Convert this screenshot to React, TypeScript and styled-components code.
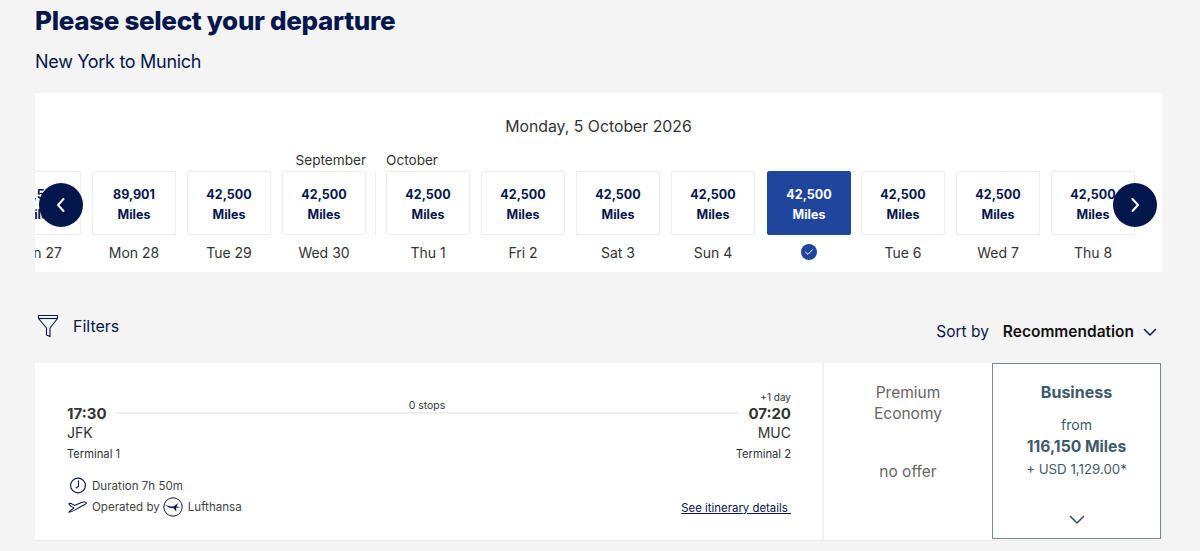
import React from 'react';
import styled, { createGlobalStyle } from 'styled-components';

const FONT = `Inter, "Liberation Sans", sans-serif`;
const NAVY = '#05164d';

const days = [
  { id: 'sun27', miles: '42,500', label: 'Sun 27' },
  { id: 'mon28', miles: '89,901', label: 'Mon 28' },
  { id: 'tue29', miles: '42,500', label: 'Tue 29' },
  { id: 'wed30', miles: '42,500', label: 'Wed 30', month: 'September', monthEnd: true },
  { id: 'thu1', miles: '42,500', label: 'Thu 1', month: 'October', monthStart: true },
  { id: 'fri2', miles: '42,500', label: 'Fri 2' },
  { id: 'sat3', miles: '42,500', label: 'Sat 3' },
  { id: 'sun4', miles: '42,500', label: 'Sun 4' },
  { id: 'mon5', miles: '42,500', label: '', selected: true },
  { id: 'tue6', miles: '42,500', label: 'Tue 6' },
  { id: 'wed7', miles: '42,500', label: 'Wed 7' },
  { id: 'thu8', miles: '42,500', label: 'Thu 8' },
];

const App: React.FC = () => {
  return (
    <Page>
      <GlobalStyle />
      <Title>Please select your departure</Title>
      <Subtitle>New York to Munich</Subtitle>

      <Calendar>
        <CalendarDate>Monday, 5 October 2026</CalendarDate>
        <StripWrap>
          <Strip>
            {days.map(day => (
              <Day key={day.id} $monthStart={day.monthStart} $selected={day.selected}>
                <Month $end={day.monthEnd}>{day.month}</Month>
                <DayCard $selected={day.selected}>
                  <span>{day.miles}</span>
                  <span>Miles</span>
                </DayCard>
                <DayLabel>
                  {day.selected ? <CheckIcon /> : day.label}
                </DayLabel>
              </Day>
            ))}
          </Strip>
          <ArrowButton $side="left">
            <svg width="12" height="16" viewBox="0 0 12 16" fill="none" stroke="#fff" strokeWidth="2" strokeLinecap="round" strokeLinejoin="round">
              <path d="M8.5 2 L3 8 L8.5 14" />
            </svg>
          </ArrowButton>
          <ArrowButton $side="right">
            <svg width="12" height="16" viewBox="0 0 12 16" fill="none" stroke="#fff" strokeWidth="2" strokeLinecap="round" strokeLinejoin="round">
              <path d="M3.5 2 L9 8 L3.5 14" />
            </svg>
          </ArrowButton>
        </StripWrap>
      </Calendar>

      <Toolbar>
        <FilterButton>
          <svg width="24" height="24" viewBox="0 0 24 24" fill="none" stroke={NAVY} strokeWidth="1.1" strokeLinejoin="round">
            <path d="M2.5 1.5 H21.5 V4.5 L14 14 V22.5 L10.5 21 V14 L2.5 4.5 Z" />
            <path d="M2.5 4.5 H21.5" />
          </svg>
          Filters
        </FilterButton>
        <SortBox>
          <SortLabel>Sort by</SortLabel>
          <SortValue>Recommendation</SortValue>
          <svg width="14" height="9" viewBox="0 0 14 9" fill="none" stroke={NAVY} strokeWidth="1.5" strokeLinecap="round" strokeLinejoin="round">
            <path d="M1.5 1.5 L7 7 L12.5 1.5" />
          </svg>
        </SortBox>
      </Toolbar>

      <Result>
        <FlightInfo>
          <Route>
            <Endpoint $width={49}>
              <DayShift>&nbsp;</DayShift>
              <Time>17:30</Time>
              <Airport>JFK</Airport>
              <Terminal>Terminal 1</Terminal>
            </Endpoint>
            <RouteLine>
              <Stops>0 stops</Stops>
            </RouteLine>
            <Endpoint $width={53} $right>
              <DayShift>+1 day</DayShift>
              <Time>07:20</Time>
              <Airport>MUC</Airport>
              <Terminal>Terminal 2</Terminal>
            </Endpoint>
          </Route>
          <Meta>
            <MetaList>
              <MetaRow>
                <svg width="18" height="17" viewBox="0 0 18 17" fill="none" stroke={NAVY} strokeWidth="1.1" strokeLinecap="round">
                  <circle cx="9.5" cy="8.5" r="7.4" />
                  <path d="M10 3.8 V9 L7.6 11" />
                </svg>
                Duration 7h 50m
              </MetaRow>
              <MetaRow>
                <svg width="19" height="12" viewBox="0 0 19 12" fill="none" stroke={NAVY} strokeWidth="1.05" strokeLinejoin="round">
                  <path d="M.8 2.8 L2.6 2.2 L6.4 4.4 L13.6 1.4 C15.6 .7 18.4 1 18.4 2 C18.4 3 16 4 14.2 4.8 L7.6 8.6 C5.4 9.9 2.8 11.2 .8 11.2 C1.4 10.2 4.2 8.4 6 6.9 L3 5.4 Z" />
                </svg>
                Operated by
                <LogoMark>
                  <svg width="20" height="20" viewBox="0 0 20 20" fill="none">
                    <circle cx="10" cy="10" r="9.2" stroke={NAVY} strokeWidth="1" />
                    <path d="M1.6 7.4 C5 9 8 9.6 10.4 9.4 L15.4 6 L13.4 9.6 L18 10.2 L13.2 10.8 L13.2 14.4 L10.4 11 C7 11.2 4.4 10 1.6 7.4 Z" fill={NAVY} />
                  </svg>
                </LogoMark>
                Lufthansa
              </MetaRow>
            </MetaList>
            <DetailsLink>See itinerary details&nbsp;</DetailsLink>
          </Meta>
        </FlightInfo>

        <PremiumCell>
          <CabinName>Premium<br />Economy</CabinName>
          <NoOffer>no offer</NoOffer>
        </PremiumCell>

        <BusinessCell>
          <BusinessName>Business</BusinessName>
          <From>from</From>
          <PriceMiles>116,150 Miles</PriceMiles>
          <PriceCash>+ USD 1,129.00*</PriceCash>
          <Expand>
            <svg width="16" height="10" viewBox="0 0 16 10" fill="none" stroke="#37505f" strokeWidth="1.6" strokeLinecap="round" strokeLinejoin="round">
              <path d="M1.5 1.5 L8 8 L14.5 1.5" />
            </svg>
          </Expand>
        </BusinessCell>
      </Result>
    </Page>
  );
};

const CheckIcon: React.FC = () => (
  <svg width="16" height="16" viewBox="0 0 16 16">
    <circle cx="8" cy="8" r="8" fill="#1f459c" />
    <path d="M4.6 8.2 L7 10.4 L11.4 5.8" fill="none" stroke="#fff" strokeWidth="1" strokeLinecap="round" strokeLinejoin="round" />
  </svg>
);

const GlobalStyle = createGlobalStyle`
  html, body {
    margin: 0;
    padding: 0;
    background: #f4f4f4;
  }
  body {
    font-family: ${FONT};
    overflow: hidden;
  }
`;

const Page = styled.div`
  width: 1127px;
  height: 551px;
  margin-left: 35px;
  padding-top: 4px;
  box-sizing: border-box;
  overflow: hidden;
`;

const Title = styled.h1`
  margin: 0;
  font-size: 26px;
  line-height: 33px;
  font-weight: 800;
  letter-spacing: -0.32px;
  color: ${NAVY};
`;

const Subtitle = styled.div`
  margin-top: 13px;
  font-size: 18px;
  line-height: 24px;
  letter-spacing: -0.3px;
  color: ${NAVY};
`;

const Calendar = styled.section`
  margin-top: 19px;
  height: 179px;
  background: #fff;
  padding-top: 24px;
  box-sizing: border-box;
`;

const CalendarDate = styled.div`
  text-align: center;
  font-size: 15.8px;
  line-height: 20px;
  color: #333;
`;

const StripWrap = styled.div`
  position: relative;
  margin-top: 14px;
`;

const Strip = styled.div`
  display: flex;
  width: 1101px;
  overflow: hidden;
`;

const Day = styled.div<{ $monthStart?: boolean; $selected?: boolean }>`
  flex: 0 0 84px;
  margin-right: ${p => (p.$selected ? '10px' : '11px')};
  position: relative;
  margin-left: ${p => (p.$monthStart ? '9px' : p.$selected ? '1px' : '0')};
  &:first-child {
    margin-left: -38px;
  }
  ${p =>
    p.$monthStart &&
    `
    &::before {
      content: '';
      position: absolute;
      left: -11px;
      top: 20px;
      height: 64px;
      width: 1px;
      background: #eee;
    }
  `}
`;

const Month = styled.div<{ $end?: boolean }>`
  height: 19px;
  padding-top: 1px;
  font-size: 13.6px;
  line-height: 17px;
  color: #333;
  white-space: nowrap;
  text-align: ${p => (p.$end ? 'right' : 'left')};
`;

const DayCard = styled.div<{ $selected?: boolean }>`
  height: 64px;
  box-sizing: border-box;
  padding-top: 2px;
  border: 1px solid ${p => (p.$selected ? '#1f459c' : '#ececec')};
  border-radius: 2px;
  background: ${p => (p.$selected ? '#1f459c' : '#fff')};
  color: ${p => (p.$selected ? '#fff' : NAVY)};
  display: flex;
  flex-direction: column;
  align-items: center;
  justify-content: center;
  gap: 3px;
  font-size: 12.5px;
  line-height: 17px;
  font-weight: 700;
`;

const DayLabel = styled.div`
  height: 34px;
  display: flex;
  align-items: center;
  justify-content: center;
  font-size: 14px;
  color: #333;
  white-space: nowrap;
`;

const ArrowButton = styled.button<{ $side: 'left' | 'right' }>`
  position: absolute;
  top: 32px;
  ${p => (p.$side === 'left' ? 'left: 4px;' : 'left: 1078px;')}
  width: 44px;
  height: 44px;
  border-radius: 50%;
  border: 0;
  padding: 0;
  background: ${NAVY};
  display: flex;
  align-items: center;
  justify-content: center;
`;

const Toolbar = styled.div`
  height: 91px;
  display: flex;
  justify-content: space-between;
  align-items: flex-start;
  padding-right: 2px;
`;

const FilterButton = styled.div`
  display: flex;
  align-items: center;
  gap: 13px;
  margin: 42px 0 0 1px;
  font-size: 16px;
  line-height: 24px;
  color: ${NAVY};
`;

const SortBox = styled.div`
  display: flex;
  align-items: center;
  margin-top: 50px;
  padding-right: 3px;
  font-size: 15.5px;
  line-height: 20px;
`;

const SortLabel = styled.span`
  color: ${NAVY};
  margin-right: 14px;
`;

const SortValue = styled.span`
  color: #111;
  font-weight: 600;
  margin-right: 9px;
`;

const Result = styled.section`
  display: grid;
  grid-template-columns: 789px 168px 169px;
  width: 1126px;
  height: 177px;
  background: #fff;
  border-bottom: 1px solid #ececec;
  box-sizing: content-box;
`;

const FlightInfo = styled.div`
  padding: 27px 31px 0 32px;
  display: flex;
  flex-direction: column;
  border-right: 2px solid #f2f2f2;
`;

const Route = styled.div`
  display: flex;
`;

const Endpoint = styled.div<{ $right?: boolean; $width: number }>`
  flex: 0 0 ${p => p.$width}px;
  min-width: 0;
  display: flex;
  flex-direction: column;
  align-items: ${p => (p.$right ? 'flex-end' : 'flex-start')};
  color: #333;
  white-space: nowrap;
  z-index: 1;
`;

const DayShift = styled.div`
  font-size: 10px;
  line-height: 14px;
`;

const Time = styled.div`
  font-size: 15px;
  line-height: 20px;
  font-weight: 700;
`;

const Airport = styled.div`
  font-size: 14px;
  line-height: 18px;
`;

const Terminal = styled.div`
  margin-top: 4px;
  font-size: 11.2px;
  line-height: 16px;
`;

const RouteLine = styled.div`
  flex: 1;
  height: 22px;
  border-bottom: 2px solid #eee;
  box-sizing: content-box;
  text-align: center;
`;

const Stops = styled.div`
  padding-top: 9px;
  font-size: 10.5px;
  line-height: 14px;
  color: #333;
`;

const Meta = styled.div`
  margin-top: 14px;
  display: flex;
  justify-content: space-between;
  align-items: flex-end;
`;

const MetaList = styled.div`
  display: flex;
  flex-direction: column;
  gap: 2px;
`;

const MetaRow = styled.div`
  display: flex;
  align-items: center;
  height: 19px;
  font-size: 11.6px;
  color: #444;
  white-space: nowrap;
  > svg {
    width: 19px;
    margin: 0 5px 0 1px;
    flex: none;
  }
`;

const LogoMark = styled.span`
  display: inline-flex;
  margin: 0 5px 0 3px;
`;

const DetailsLink = styled.a`
  font-size: 11.4px;
  line-height: 16px;
  margin-bottom: 0;
  color: ${NAVY};
  text-decoration: underline;
`;

const PremiumCell = styled.div`
  display: flex;
  flex-direction: column;
  align-items: center;
  padding-top: 19px;
  color: #666;
  font-size: 15.5px;
`;

const CabinName = styled.div`
  line-height: 21px;
  text-align: center;
`;

const NoOffer = styled.div`
  margin-top: 38px;
  line-height: 20px;
`;

const BusinessCell = styled.div`
  border: 1px solid #6f8a99;
  margin: 0 0 -1px;
  display: flex;
  flex-direction: column;
  align-items: center;
  color: #3f5a69;
  padding-top: 18px;
  box-sizing: border-box;
  height: 176px;
`;

const BusinessName = styled.div`
  font-size: 16px;
  line-height: 21px;
  font-weight: 700;
`;

const From = styled.div`
  margin-top: 13px;
  font-size: 14px;
  line-height: 18px;
`;

const PriceMiles = styled.div`
  margin-top: 2px;
  font-size: 15.7px;
  line-height: 22px;
  font-weight: 700;
`;

const PriceCash = styled.div`
  font-size: 13.3px;
  line-height: 22px;
`;

const Expand = styled.div`
  margin-top: 35px;
  line-height: 0;
`;

export default App;
